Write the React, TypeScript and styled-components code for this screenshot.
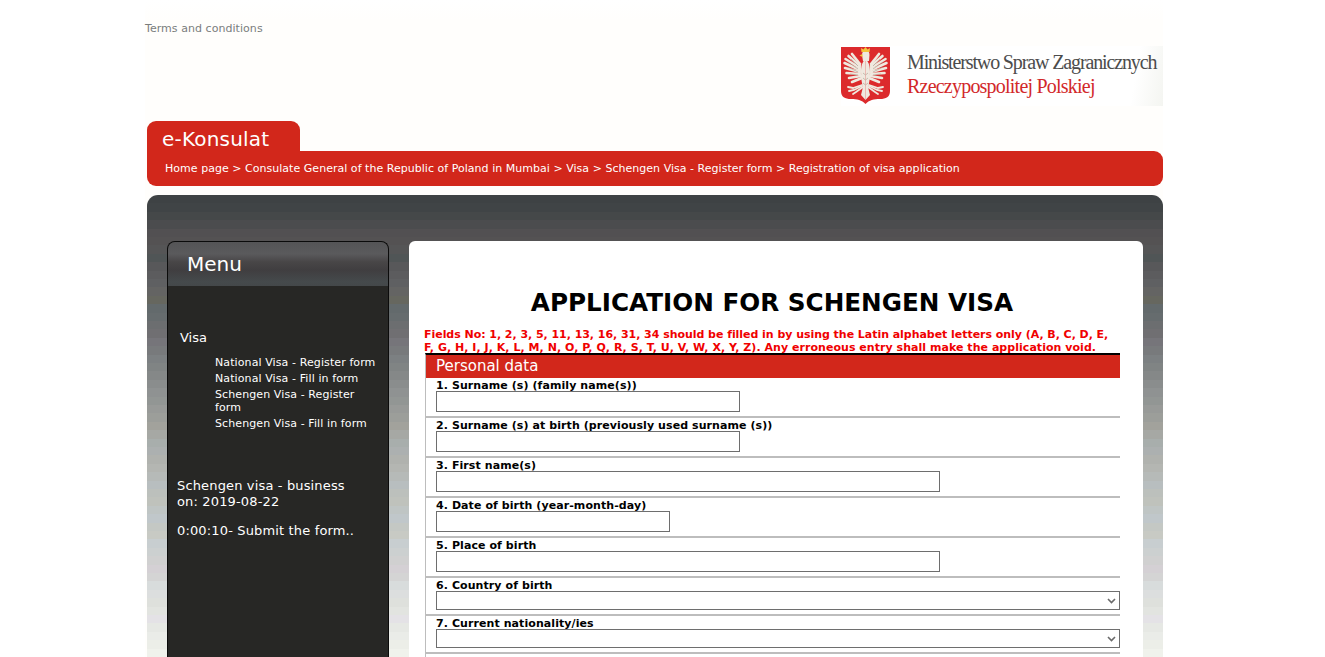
import React from "react";
import styled, { createGlobalStyle } from "styled-components";

const Global = createGlobalStyle`
  html, body { margin: 0; padding: 0; height: 657px; overflow: hidden; background: #fff; }
  body { font-family: "DejaVu Sans", Verdana, sans-serif; }
`;

const bands = [
  "#3e4244","#404446","#454849","#4b4c4e","#525052","#545253","#555556","#505556","#58585a","#5c5c5e",
  "#5f6062","#646463","#66675f","#636a6c","#666c6e","#6c6e70","#706f72","#76757a","#787a7c","#7c8082",
  "#808484","#858888","#8a8d8d","#8f9292","#929694","#989a98","#9c9e9a","#a2a29c","#a6a8a4","#a8aeac",
  "#acb0b0","#b0b2ae","#b4b6b2","#b6bab8","#b8bebf","#bcc0bc","#bfc2bc","#bfc5c4","#c0c7ca","#c4c8c4",
  "#c8cac4","#c8ced0","#ccd0d0","#d0d0d0","#d4d0d4","#d4d4d4","#d8dcdc","#dcdede","#dee0dc","#e2e4e0",
  "#e4e2e6","#e6e8e4","#eaece8","#eceee8","#f0f2ec","#f3f5f0","#f5f7f2",
];
const bandGradient = `linear-gradient(180deg, ${bands
  .map((c, i) => `${c} ${i * 8.4}px, ${c} ${(i + 1) * 8.4}px`)
  .join(", ")})`;

const Page = styled.div`
  width: 1018px;
  margin-left: 145px;
  padding-top: 13px;
  background: linear-gradient(180deg, #fff 0, #fffefc 20px);
`;
const TopLink = styled.a`
  display: block;
  font-size: 11px;
  line-height: 13px;
  height: 24px;
  padding-top: 9px;
  letter-spacing: 0.05px;
  color: #7a7d7c;
`;
const LogoRow = styled.div`
  margin-left: 696px;
  height: 60px;
  display: flex;
  align-items: center;
  background: linear-gradient(100deg, #fff 90%, #f4f5f1 100%);
`;
const Crest = styled.svg`
  width: 49px;
  height: 57px;
  flex: none;
  margin-top: -1px;
`;
const LogoText = styled.div`
  margin-left: 17px;
  font-family: "Liberation Serif", serif;
  font-size: 20px;
  line-height: 24px;
  white-space: nowrap;
  margin-top: -5px;
`;
const LogoGrey = styled.div`
  color: #4c4c4c;
  letter-spacing: -1.13px;
`;
const LogoRed = styled.div`
  color: #d2282a;
  letter-spacing: -0.78px;
`;
const Banner = styled.div`
  margin: 15px 0 0 2px;
`;
const Tab = styled.div`
  width: 153px;
  height: 30px;
  box-sizing: border-box;
  background: #d2271b;
  border-radius: 9px 9px 0 0;
  color: #fff;
  font-size: 20px;
  line-height: 36px;
  letter-spacing: 0.2px;
  padding-left: 15px;
`;
const Crumbs = styled.div`
  height: 35px;
  background: #d2271b;
  border-radius: 0 9px 9px 9px;
  color: #fff;
  font-size: 11px;
  line-height: 35px;
  letter-spacing: 0.03px;
  padding-left: 18px;
  box-sizing: border-box;
  white-space: nowrap;
`;
const Main = styled.div`
  margin: 9px 0 0 2px;
  border-radius: 11px 11px 0 0;
  background: ${bandGradient};
  padding: 46px 20px 0;
  display: flex;
  gap: 20px;
  align-items: flex-start;
`;
const Side = styled.aside`
  width: 222px;
  height: 460px;
  flex: none;
  box-sizing: border-box;
  background: #272725;
  border: 1px solid #0b0b0b;
  border-bottom: none;
  border-radius: 8px 8px 0 0;
  color: #fff;
`;
const SideHead = styled.div`
  height: 44px;
  box-sizing: border-box;
  border-radius: 7px 7px 0 0;
  background: linear-gradient(180deg, #545456 0, #5a5a5c 12px, #484647 20px, #403e40 28px, #454a4c 40px, #44484a 44px);
  font-size: 20px;
  line-height: 44px;
  padding-left: 19px;
`;
const SideBody = styled.div`
  padding: 44px 0 0 12px;
`;
const SideTitle = styled.div`
  font-size: 13px;
  line-height: 16px;
`;
const SideList = styled.ul`
  list-style: none;
  margin: 10px 0 0;
  padding: 0 0 0 35px;
  font-size: 11px;
  line-height: 13px;
  letter-spacing: 0.1px;
  white-space: nowrap;
`;
const SideItem = styled.li`
  margin-bottom: 3px;
`;
const Status = styled.div`
  margin: 48px 0 0 -3px;
  font-size: 13px;
  line-height: 16px;
  letter-spacing: 0.15px;
`;
const StatusGap = styled.div`
  margin-top: 13px;
`;
const Content = styled.main`
  flex: 1;
  height: 460px;
  background: #fff;
  border-radius: 6px 6px 0 0;
  padding: 46px 23px 0 15px;
  box-sizing: border-box;
  color: #000;
`;
const Title = styled.h1`
  margin: 0 0 9px;
  text-align: center;
  font-size: 24.67px;
  line-height: 32px;
  font-weight: bold;
`;
const Note = styled.p`
  margin: 0 0 -1px;
  color: #f00000;
  font-size: 11px;
  line-height: 13px;
  font-weight: bold;
  white-space: nowrap;
`;
const NoteLine = styled.span<{ $ls: number }>`
  display: block;
  letter-spacing: ${(p) => p.$ls}px;
`;
const Table = styled.div`
  margin-left: 1px;
  border-top: 2px solid #000;
  border-left: 1px solid #bdbdbd;
`;
const Legend = styled.div`
  height: 23px;
  background: #d2271b;
  color: #fff;
  font-size: 15px;
  line-height: 23px;
  padding-left: 10px;
`;
const Row = styled.div<{ $h: number }>`
  height: ${(p) => p.$h}px;
  box-sizing: border-box;
  border-bottom: 2px solid #bdbdbd;
  padding: 0 0 0 10px;
`;
const Label = styled.label`
  display: block;
  height: 13px;
  font-size: 11px;
  line-height: 15px;
  font-weight: bold;
  letter-spacing: 0.08px;
`;
const Field = styled.div<{ $w: number }>`
  width: ${(p) => p.$w}px;
  height: 21px;
  box-sizing: border-box;
  border: 1px solid #6e6e6e;
  background: #fff;
`;
const SelectBox = styled.div`
  height: 19px;
  box-sizing: border-box;
  border: 1px solid #6e6e6e;
  background: #fff;
  display: flex;
  align-items: center;
  justify-content: flex-end;
  padding-right: 3px;
`;
const Chevron = styled.svg`
  width: 9px;
  height: 6px;
`;

const Arrow = () => (
  <Chevron viewBox="0 0 9 6">
    <path d="M1 1l3.500 3.500L8 1" fill="none" stroke="#6a6a6a" strokeWidth="1.6" />
  </Chevron>
);

const halfEagle = (
  <>
    <g fill="none" stroke="#efe9df" strokeLinecap="round">
      <g strokeWidth="2.6">
        <path d="M19 17L11 7" />
        <path d="M19 19L7.500 9" />
        <path d="M19 21L4.500 12" />
        <path d="M19 23L3.500 16" />
        <path d="M19 25L4 21" />
        <path d="M19 27L5.500 26" />
        <path d="M20 29L8 31" />
        <path d="M21 31L11 35" />
      </g>
      <g strokeWidth="1.8">
        <path d="M21 38L12 41L7 40" />
        <path d="M21 39L13 43L8 44" />
        <path d="M22 40L15 45L12 47" />
      </g>
    </g>
    <path d="M24.500 13C21 14 20 20 20 25C20 32 21 37 22 40L20 48L24.500 53z" fill="#efe9df" />
    <g fill="none" stroke="#a89c8c" strokeWidth=".6">
      <path d="M17 19L10 12M17 22L7 15M17 25L7 20M17 28L9 27" />
      <path d="M22 26L24.500 28M22 31L24.500 33M22 36L24.500 38" />
    </g>
  </>
);

const Eagle = () => (
  <Crest viewBox="0 0 49 57">
    <path d="M0 0h49v44c0 6-4 8-10 8-6 0-11 1-14.500 5C21 53 16 52 10 52 4 52 0 50 0 44z" fill="#dc2a2c" />
    {halfEagle}
    <g transform="matrix(-1 0 0 1 49 0)">{halfEagle}</g>
    <path d="M21 8c0-3 1.500-4.500 4-4.500 2.500 0 3.500 2 3.500 4.500l-.5 6h-6z" fill="#efe9df" />
    <path d="M21.500 7l-3 1.500 3 1.500z" fill="#f3c53a" />
    <path d="M20.500 5L20 1l2.500 1.500L24.500 0l2 2.500L29 1l-.5 4z" fill="#f3c53a" />
  </Crest>
);

const textRows: [string, number][] = [
  ["1. Surname (s) (family name(s))", 304],
  ["2. Surname (s) at birth (previously used surname (s))", 304],
  ["3. First name(s)", 504],
  ["4. Date of birth (year-month-day)", 234],
  ["5. Place of birth", 504],
];

export default function App() {
  return (
    <Page>
      <Global />
      <TopLink>Terms and conditions</TopLink>
      <LogoRow>
        <Eagle />
        <LogoText>
          <LogoGrey>Ministerstwo Spraw Zagranicznych</LogoGrey>
          <LogoRed>Rzeczypospolitej Polskiej</LogoRed>
        </LogoText>
      </LogoRow>
      <Banner>
        <Tab>e-Konsulat</Tab>
        <Crumbs>
          Home page &gt; Consulate General of the Republic of Poland in Mumbai &gt; Visa &gt; Schengen Visa - Register form &gt; Registration of visa application
        </Crumbs>
      </Banner>
      <Main>
        <Side>
          <SideHead>Menu</SideHead>
          <SideBody>
            <SideTitle>Visa</SideTitle>
            <SideList>
              <SideItem>National Visa - Register form</SideItem>
              <SideItem>National Visa - Fill in form</SideItem>
              <SideItem>
                Schengen Visa - Register
                <br />
                form
              </SideItem>
              <SideItem>Schengen Visa - Fill in form</SideItem>
            </SideList>
            <Status>
              Schengen visa - business
              <br />
              on: 2019-08-22
              <StatusGap>0:00:10- Submit the form..</StatusGap>
            </Status>
          </SideBody>
        </Side>
        <Content>
          <Title>APPLICATION FOR SCHENGEN VISA</Title>
          <Note>
            <NoteLine $ls={-0.04}>
              Fields No: 1, 2, 3, 5, 11, 13, 16, 31, 34 should be filled in by using the Latin alphabet letters only (A, B, C, D, E,
            </NoteLine>
            <NoteLine $ls={0.04}>
              F, G, H, I, J, K, L, M, N, O, P, Q, R, S, T, U, V, W, X, Y, Z). Any erroneous entry shall make the application void.
            </NoteLine>
          </Note>
          <Table>
            <Legend>Personal data</Legend>
            {textRows.map(([label, width]) => (
              <Row key={label} $h={40}>
                <Label>{label}</Label>
                <Field $w={width} />
              </Row>
            ))}
            <Row $h={38}>
              <Label>6. Country of birth</Label>
              <SelectBox>
                <Arrow />
              </SelectBox>
            </Row>
            <Row $h={38}>
              <Label>7. Current nationality/ies</Label>
              <SelectBox>
                <Arrow />
              </SelectBox>
            </Row>
            <Row $h={38}>
              <Label>Nationality at birth, if different</Label>
            </Row>
          </Table>
        </Content>
      </Main>
    </Page>
  );
}
